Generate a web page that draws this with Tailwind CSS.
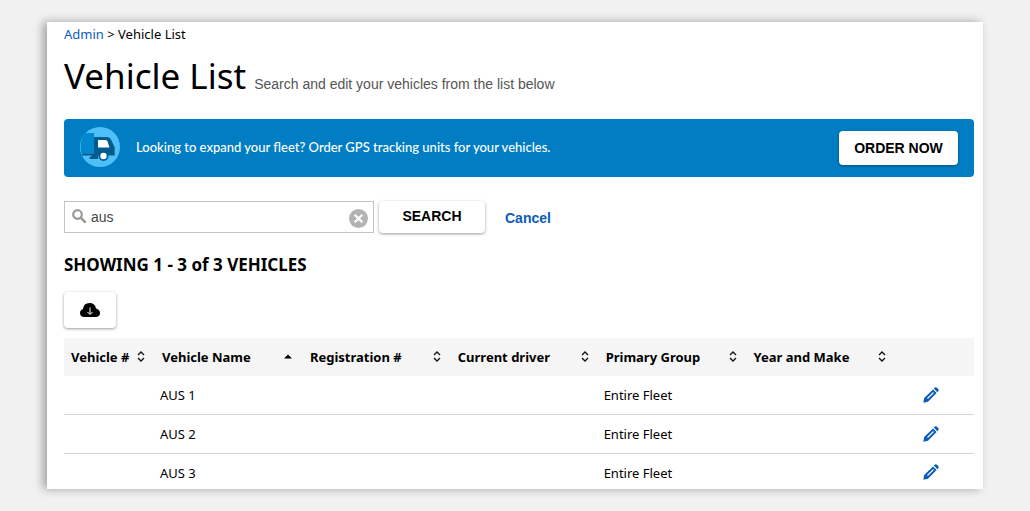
<!DOCTYPE html>
<html lang="en">
<head>
  <meta charset="UTF-8">
  <meta name="viewport" content="width=device-width, initial-scale=1.0">
  <title>Vehicle List</title>
  <script src="https://cdn.jsdelivr.net/npm/@tailwindcss/browser@4"></script>
</head>
<body class="bg-[#f1f1f1] min-h-screen pt-[22px] pb-[22px] text-black font-['Noto_Sans',sans-serif]">

  <!-- Sort icons -->
  <svg class="hidden">
    <symbol id="sort" viewBox="0 0 8 11">
      <path d="M1 4L4 1L7 4M1 7L4 10L7 7" fill="none" stroke="#111" stroke-width="1.4"/>
    </symbol>
    <symbol id="sort-up" viewBox="0 0 8 11">
      <path d="M0 7.5L4 3.5L8 7.5Z" fill="#000"/>
    </symbol>
    <symbol id="pencil" viewBox="0 0 16 16">
      <path d="M0.3 15.7L1.2 11L10 2.4L13.6 6L5 14.8Z" fill="#0a5cb8"/>
      <path d="M10.800 1.600L12 0.5Q13 -0.1 14 0.8L15.2 2Q16.1 3 15.4 4.100L14.400 5.200Z" fill="#0a5cb8"/>
      <path d="M4.500 11.500L10.500 5.500" stroke="#fff" stroke-width="1.1"/>
    </symbol>
  </svg>

  <main class="bg-white ml-[47px] mr-[47px] pl-[17px] pr-[9px] shadow-[-4px_0px_9px_rgba(0,0,0,0.33)]">
    <nav class="pt-1 text-[13px] leading-4">
      <a href="#" class="text-[#0a5cb8] hover:underline">Admin</a> &gt; <span>Vehicle List</span>
    </nav>

    <header class="flex items-baseline gap-2 pt-3">
      <h1 class="text-[35px] leading-[44px]">Vehicle List</h1>
      <p class="text-sm text-[#555] font-['Liberation_Sans',Arial,sans-serif]">Search and edit your vehicles from the list below</p>
    </header>

    <!-- Banner -->
    <section class="mt-[21px] flex items-center h-[58px] pl-4 pr-4 rounded bg-[#007dc3] text-white">
      <svg class="w-10 h-10 mb-0.5 shrink-0" viewBox="0 0 40 40">
        <circle cx="20" cy="20" r="20" fill="#4fc0f7"/>
        <path d="M5 6H14V26.500H1.500Q-1 14 5 6Z" fill="#0089cf"/>
        <path d="M14 10H27.500Q30 10 31 12.500L34.700 20.500V28.500H2V26.500H14Z" fill="#005b8e"/>
        <path d="M12.500 28H18V32H9.500V30.500Z" fill="#005b8e"/>
        <path d="M18 13H25.500Q27 13 27.500 14.500L29.500 20.500H18Z" fill="#fff"/>
        <circle cx="23.500" cy="29" r="5" fill="#005b8e"/>
        <circle cx="23.500" cy="29" r="3.200" fill="#fff"/>
      </svg>
      <p class="ml-4 mb-0.5 text-[13px] leading-5 font-medium font-['Lato','Noto_Sans',sans-serif]">Looking to expand your fleet? Order GPS tracking units for your vehicles.</p>
      <button type="button" class="ml-auto w-[119px] h-[34px] rounded bg-white text-black text-sm font-bold font-['Liberation_Sans',Arial,sans-serif] shadow-[0_1px_3px_rgba(0,0,0,0.35)]">ORDER NOW</button>
    </section>

    <!-- Search -->
    <form class="mt-6 flex items-start font-['Liberation_Sans',Arial,sans-serif]">
      <div class="flex items-center w-[310px] h-8 pl-[7px] pr-[5px] border border-[#c4c4c4] bg-white">
        <svg class="w-[14px] h-[14px] mb-0.5 shrink-0" viewBox="0 0 14 14" fill="none" stroke="#999">
          <circle cx="5.500" cy="5.500" r="4.300" stroke-width="2.200"/>
          <path d="M8.700 8.700L13 13" stroke-width="2.500" stroke-linecap="round"/>
        </svg>
        <input type="text" value="aus" aria-label="Search vehicles" class="ml-[5px] grow min-w-0 text-sm text-[#444] focus:outline-none">
        <button type="reset" aria-label="Clear search" class="mt-0.5 shrink-0">
          <svg class="w-[19px] h-[19px]" viewBox="0 0 20 20">
            <circle cx="10" cy="10" r="10" fill="#b3b3b3"/>
            <path d="M6 6L14 14M14 6L6 14" stroke="#fff" stroke-width="2.400"/>
          </svg>
        </button>
      </div>
      <button type="submit" class="ml-[5px] w-[106px] h-8 pb-0.5 rounded text-sm font-bold shadow-[0_1px_3px_rgba(0,0,0,0.4)]">SEARCH</button>
      <a href="#" class="ml-5 pt-px leading-8 text-sm font-bold text-[#0a5cb8] hover:underline">Cancel</a>
    </form>

    <h2 class="mt-[19px] text-[17px] leading-6 font-bold">SHOWING 1 - 3 of 3 VEHICLES</h2>

    <button type="button" aria-label="Download" class="mt-[15px] flex items-center justify-center w-[52px] h-9 rounded shadow-[0_1px_3px_rgba(0,0,0,0.4)]">
      <svg class="w-5 h-[14px]" viewBox="0 0 20 14">
        <path d="M4.500 14Q0 13.800 0 10Q0 7 3 6Q3.500 0 9.500 0Q15 0 16 5.500Q20 6.500 20 10Q20 14 15.500 14Z" fill="#000"/>
        <path d="M10 4.500V11M7.500 9L10 11.500L12.500 9" fill="none" stroke="#fff" stroke-width="1"/>
      </svg>
    </button>

    <!-- Vehicles -->
    <table class="mt-[10px] w-full table-fixed text-left text-[13px] leading-[18px]">
      <colgroup>
        <col class="w-[10%]">
        <col class="w-[16.25%]">
        <col class="w-[16.25%]">
        <col class="w-[16.25%]">
        <col class="w-[16.25%]">
        <col class="w-[16.25%]">
        <col>
      </colgroup>
      <thead class="bg-[#f5f5f5]">
        <tr>
          <th class="py-[10px] pl-[7px] pr-[10px]">
            <div class="flex items-center justify-between">Vehicle # <svg class="w-2 h-[11px] mb-0.5"><use href="#sort"/></svg></div>
          </th>
          <th class="py-[10px] pl-[7px] pr-[11px]">
            <div class="flex items-center justify-between">Vehicle Name <svg class="w-2 h-[11px] mb-0.5"><use href="#sort-up"/></svg></div>
          </th>
          <th class="py-[10px] pl-[7px] pr-[10px]">
            <div class="flex items-center justify-between">Registration # <svg class="w-2 h-[11px] mb-0.5"><use href="#sort"/></svg></div>
          </th>
          <th class="py-[10px] pl-[7px] pr-[10px]">
            <div class="flex items-center justify-between">Current driver <svg class="w-2 h-[11px] mb-0.5"><use href="#sort"/></svg></div>
          </th>
          <th class="py-[10px] pl-[7px] pr-[10px]">
            <div class="flex items-center justify-between">Primary Group <svg class="w-2 h-[11px] mb-0.5"><use href="#sort"/></svg></div>
          </th>
          <th class="py-[10px] pl-[7px] pr-2">
            <div class="flex items-center justify-between">Year and Make <svg class="w-2 h-[11px] mb-0.5"><use href="#sort"/></svg></div>
          </th>
          <th></th>
        </tr>
      </thead>
      <tbody>
        <tr class="border-b border-[#d5d5d5]">
          <td></td>
          <td class="pt-[10px] pb-[10px] pl-[5px]">AUS 1</td>
          <td></td>
          <td></td>
          <td class="pt-[10px] pb-[10px] pl-[5px]">Entire Fleet</td>
          <td></td>
          <td class="pl-[29px]"><a href="#" aria-label="Edit AUS 1"><svg class="w-4 h-4"><use href="#pencil"/></svg></a></td>
        </tr>
        <tr class="border-b border-[#d5d5d5]">
          <td></td>
          <td class="pt-[10px] pb-[10px] pl-[5px]">AUS 2</td>
          <td></td>
          <td></td>
          <td class="pt-[10px] pb-[10px] pl-[5px]">Entire Fleet</td>
          <td></td>
          <td class="pl-[29px]"><a href="#" aria-label="Edit AUS 2"><svg class="w-4 h-4"><use href="#pencil"/></svg></a></td>
        </tr>
        <tr>
          <td></td>
          <td class="pt-[10px] pb-[7px] pl-[5px]">AUS 3</td>
          <td></td>
          <td></td>
          <td class="pt-[10px] pb-[7px] pl-[5px]">Entire Fleet</td>
          <td></td>
          <td class="pl-[29px]"><a href="#" aria-label="Edit AUS 3"><svg class="w-4 h-4"><use href="#pencil"/></svg></a></td>
        </tr>
      </tbody>
    </table>
  </main>

</body>
</html>
